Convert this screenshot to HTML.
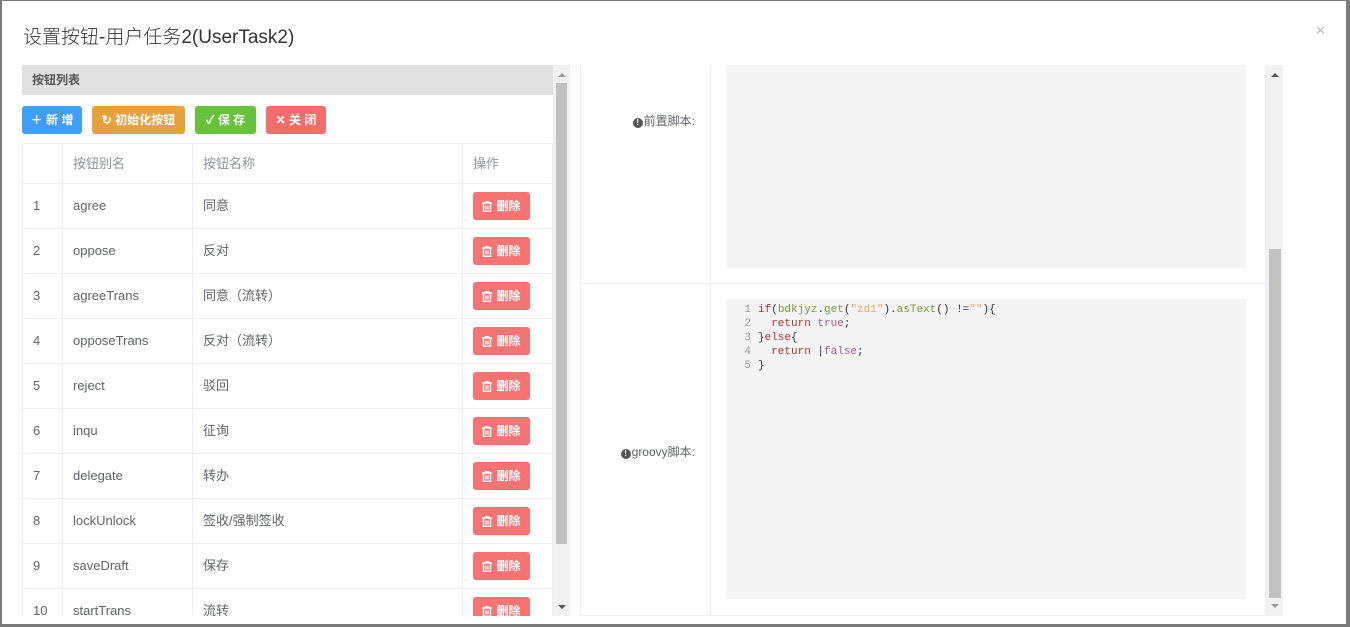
<!DOCTYPE html>
<html><head><meta charset="utf-8"><style>
*{box-sizing:border-box;margin:0;padding:0}
body{width:1350px;height:627px;background:#7a7a7a;position:relative;overflow:hidden;font-family:"Liberation Sans","Noto Sans CJK SC",sans-serif;font-size:13px;color:#606266}
.modal{position:absolute;left:2px;top:1px;width:1344px;height:623px;background:#fff}
.title{position:absolute;left:21px;top:21px;font-size:19px;color:#333;font-weight:300}
.close{position:absolute;left:1313px;top:22px;color:#bbb;font-size:13px}
.lp{position:absolute;left:20px;top:64px;width:548px;height:551px;overflow:hidden}
.hd{position:absolute;left:0;top:0;width:531px;height:30px;background:#e1e1e1;font-size:12px;font-weight:bold;color:#555;padding:8px 10px;line-height:14px}
.btn{position:absolute;top:41px;height:28px;border-radius:3px;color:#fff;font-size:12px;font-weight:bold;line-height:28px;text-align:center}
table{position:absolute;left:0;top:78px;width:531px;border-collapse:collapse;table-layout:fixed}
td{border:1px solid #ebeef5;height:45px;padding-left:10px;font-size:13px;line-height:16px;vertical-align:middle}
tr.h td{height:40px;color:#909399}
.del{display:inline-block;width:57px;height:28px;background:#f56c6c;border-radius:3px;color:#fff;font-size:12px;font-weight:bold;line-height:28px;text-align:center;opacity:.95}
.del svg{vertical-align:-2px;margin-right:4px}
.sb{position:absolute;background:#f1f1f1}
.th{position:absolute;background:#c1c1c1}
.rp{position:absolute;left:578px;top:64px;width:686px;height:551px;border:1px solid #ebeef5;border-top:none}
.lab{position:absolute;right:570px;font-size:12px;color:#606266}
.ic{display:inline-block;width:10px;height:10px;border-radius:50%;background:#555;color:#fff;font-size:8px;line-height:10px;text-align:center;font-weight:bold;vertical-align:0;margin-right:1px}
.ed{position:absolute;background:#f4f4f4}
pre{font-family:"Liberation Mono","DejaVu Sans Mono",monospace;font-size:11px;line-height:14px;color:#333}
.n{color:#999;display:inline-block;width:25px;text-align:right;margin-right:7px}
.k{color:#a33}.f{color:#7a9a3a}.s{color:#f0a860}.b{color:#a06090}
.ar{position:absolute;width:0;height:0;border-left:4px solid transparent;border-right:4px solid transparent}
</style></head><body>
<div class="modal">
<div class="title">设置按钮-用户任务2(UserTask2)</div>
<div class="close">✕</div>
<div class="lp">
<div class="hd">按钮列表</div>
<div class="btn" style="left:0;width:60px;background:#409eff">＋ 新 增</div>
<div class="btn" style="left:70px;width:93px;background:#e6a23c">↻ 初始化按钮</div>
<div class="btn" style="left:173px;width:61px;background:#67c23a">✓ 保 存</div>
<div class="btn" style="left:244px;width:60px;background:#f56c6c">✕ 关 闭</div>
<table>
<colgroup><col style="width:40px"><col style="width:130px"><col style="width:270px"><col></colgroup>
<tr class="h"><td></td><td>按钮别名</td><td>按钮名称</td><td>操作</td></tr>
<tr><td>1</td><td>agree</td><td>同意</td><td><span class="del"><svg width="10" height="11" viewBox="0 0 10 11" fill="none" stroke="#fff" stroke-width="1.4"><path d="M0 2h10M3.5 2V.7h3V2M1.5 2v8.3h7V2M4 4.5v4M6 4.5v4"/></svg>删除</span></td></tr>
<tr><td>2</td><td>oppose</td><td>反对</td><td><span class="del"><svg width="10" height="11" viewBox="0 0 10 11" fill="none" stroke="#fff" stroke-width="1.4"><path d="M0 2h10M3.5 2V.7h3V2M1.5 2v8.3h7V2M4 4.5v4M6 4.5v4"/></svg>删除</span></td></tr>
<tr><td>3</td><td>agreeTrans</td><td>同意（流转）</td><td><span class="del"><svg width="10" height="11" viewBox="0 0 10 11" fill="none" stroke="#fff" stroke-width="1.4"><path d="M0 2h10M3.5 2V.7h3V2M1.5 2v8.3h7V2M4 4.5v4M6 4.5v4"/></svg>删除</span></td></tr>
<tr><td>4</td><td>opposeTrans</td><td>反对（流转）</td><td><span class="del"><svg width="10" height="11" viewBox="0 0 10 11" fill="none" stroke="#fff" stroke-width="1.4"><path d="M0 2h10M3.5 2V.7h3V2M1.5 2v8.3h7V2M4 4.5v4M6 4.5v4"/></svg>删除</span></td></tr>
<tr><td>5</td><td>reject</td><td>驳回</td><td><span class="del"><svg width="10" height="11" viewBox="0 0 10 11" fill="none" stroke="#fff" stroke-width="1.4"><path d="M0 2h10M3.5 2V.7h3V2M1.5 2v8.3h7V2M4 4.5v4M6 4.5v4"/></svg>删除</span></td></tr>
<tr><td>6</td><td>inqu</td><td>征询</td><td><span class="del"><svg width="10" height="11" viewBox="0 0 10 11" fill="none" stroke="#fff" stroke-width="1.4"><path d="M0 2h10M3.5 2V.7h3V2M1.5 2v8.3h7V2M4 4.5v4M6 4.5v4"/></svg>删除</span></td></tr>
<tr><td>7</td><td>delegate</td><td>转办</td><td><span class="del"><svg width="10" height="11" viewBox="0 0 10 11" fill="none" stroke="#fff" stroke-width="1.4"><path d="M0 2h10M3.5 2V.7h3V2M1.5 2v8.3h7V2M4 4.5v4M6 4.5v4"/></svg>删除</span></td></tr>
<tr><td>8</td><td>lockUnlock</td><td>签收/强制签收</td><td><span class="del"><svg width="10" height="11" viewBox="0 0 10 11" fill="none" stroke="#fff" stroke-width="1.4"><path d="M0 2h10M3.5 2V.7h3V2M1.5 2v8.3h7V2M4 4.5v4M6 4.5v4"/></svg>删除</span></td></tr>
<tr><td>9</td><td>saveDraft</td><td>保存</td><td><span class="del"><svg width="10" height="11" viewBox="0 0 10 11" fill="none" stroke="#fff" stroke-width="1.4"><path d="M0 2h10M3.5 2V.7h3V2M1.5 2v8.3h7V2M4 4.5v4M6 4.5v4"/></svg>删除</span></td></tr>
<tr><td>10</td><td>startTrans</td><td>流转</td><td><span class="del"><svg width="10" height="11" viewBox="0 0 10 11" fill="none" stroke="#fff" stroke-width="1.4"><path d="M0 2h10M3.5 2V.7h3V2M1.5 2v8.3h7V2M4 4.5v4M6 4.5v4"/></svg>删除</span></td></tr>
</table>
<div class="sb" style="left:531px;top:0;width:17px;height:551px"></div>
<div class="th" style="left:534px;top:18px;width:11px;height:461px"></div>
<div class="ar" style="left:536px;top:8px;border-bottom:4px solid #999"></div>
<div class="ar" style="left:536px;top:540px;border-top:4px solid #555"></div>
</div>
<div class="rp">
<div style="position:absolute;left:129px;top:0;width:1px;height:551px;background:#ebeef5"></div>
<div style="position:absolute;left:0;top:218px;width:686px;height:1px;background:#ebeef5"></div>
<div class="lab" style="top:47px"><span class="ic">!</span>前置脚本:</div>
<div class="lab" style="top:378px"><span class="ic">!</span>groovy脚本:</div>
<div class="ed" style="left:145px;top:0;width:520px;height:203px"></div>
<div class="ed" style="left:145px;top:234px;width:520px;height:300px;padding-top:4px">
<pre><span class="n">1</span><span class="k">if</span>(<span class="f">bdkjyz</span>.<span class="f">get</span>(<span class="s">"zd1"</span>).<span class="f">asText</span>() !=<span class="s">""</span>){
<span class="n">2</span>  <span class="k">return</span> <span class="b">true</span>;
<span class="n">3</span>}<span class="k">else</span>{
<span class="n">4</span>  <span class="k">return</span> |<span class="b">false</span>;
<span class="n">5</span>}</pre></div>
</div>
<div class="sb" style="left:1264px;top:64px;width:17px;height:551px"></div>
<div class="th" style="left:1267px;top:248px;width:12px;height:349px"></div>
<div class="ar" style="left:1269px;top:72px;border-bottom:4px solid #555"></div>
<div class="ar" style="left:1269px;top:603px;border-top:4px solid #999"></div>
</div>
</body></html>
